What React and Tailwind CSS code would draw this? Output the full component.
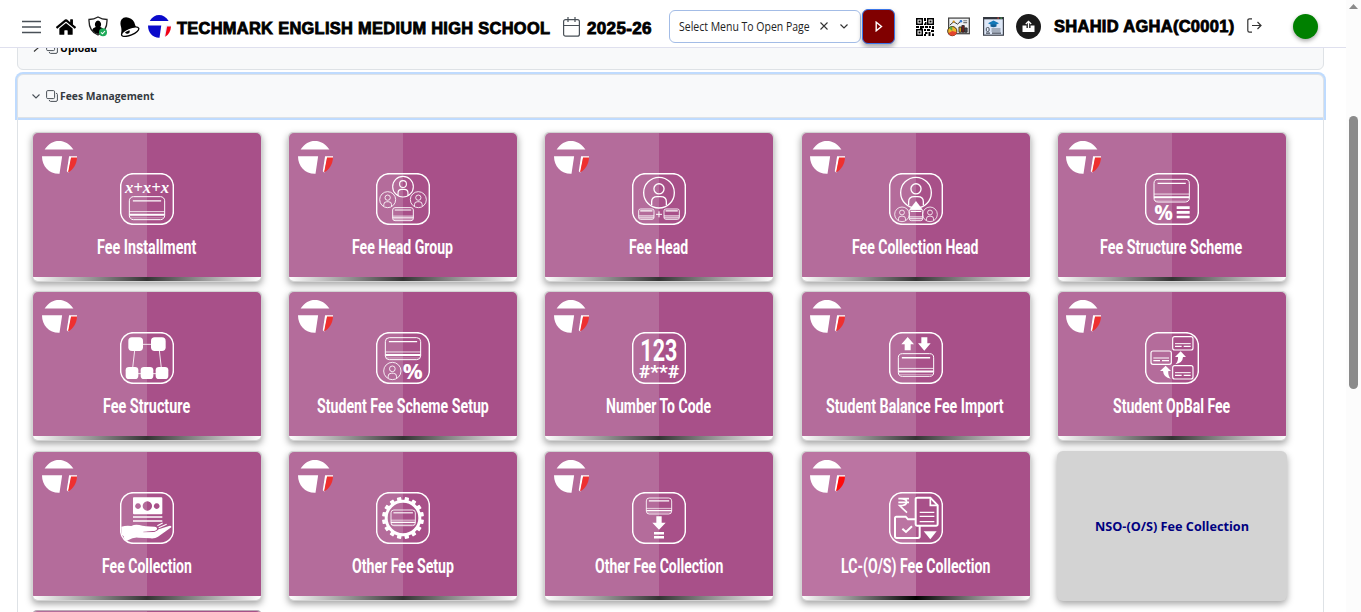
import { useLayoutEffect, useRef, useState } from "react";
import { FaHome } from "react-icons/fa";

/* Text squeezed or stretched horizontally to a given width. */
function FitText({ width, className = "", children }) {
  const ref = useRef(null);
  const [scale, setScale] = useState(1);
  useLayoutEffect(() => {
    setScale(width / ref.current.offsetWidth);
  }, [width]);
  return (
    <span className={"block shrink-0 whitespace-nowrap " + className} style={{ width }}>
      <span ref={ref} className="inline-block origin-left" style={{ transform: `scaleX(${scale})` }}>
        {children}
      </span>
    </span>
  );
}

function Logo({ main, accent, edge, className }) {
  return (
    <svg viewBox="0 0 106 100" preserveAspectRatio="none" className={className}>
      <path d="M8 26C20 8 34 0 51 0S83 8 95 26Z" fill={main} />
      <path d="M0 46H61L53 99C22 100 0 78 0 46Z" fill={main} />
      <path d="M82 46H106V52H88L80 96L75 92Z" fill={edge} />
      <path d="M88 50H106C105 70 96 86 79 95Z" fill={accent} />
    </svg>
  );
}

function Bank({ x, y, w, h, s = 3 }) {
  return (
    <g fill="none" stroke="#fff">
      <rect x={x} y={y} width={w} height={h} rx={h * 0.18} strokeWidth={s} />
      <path d={`M${x + w * 0.1} ${y + h * 0.18}H${x + w * 0.9}`} strokeWidth={s + 0.8} />
      <path d={`M${x} ${y + h * 0.65}H${x + w}`} strokeWidth={s * 0.8} />
      <path d={`M${x} ${y + h * 0.79}H${x + w}`} strokeWidth={h * 0.09} />
      <path d={`M${x + 3} ${y + h * 0.92}H${x + w - 3}`} strokeWidth={s * 0.4} />
    </g>
  );
}

function Person({ x, y, r, s = 3 }) {
  return (
    <g fill="none" stroke="#fff" strokeWidth={s}>
      <circle cx={x} cy={y} r={r} />
      <circle cx={x} cy={y - r * 0.25} r={r * 0.33} />
      <path
        d={`M${x - r * 0.48} ${y + r * 0.82}V${y + r * 0.6}Q${x - r * 0.48} ${y + r * 0.26} ${x - r * 0.12} ${y + r * 0.26}H${x + r * 0.12}Q${x + r * 0.48} ${y + r * 0.26} ${x + r * 0.48} ${y + r * 0.6}V${y + r * 0.82}`}
      />
    </g>
  );
}

function MiniCard({ x, y }) {
  return (
    <g fill="none" stroke="#fff">
      <rect x={x} y={y} width="61" height="40" rx="6" strokeWidth="3.5" />
      <path d={`M${x + 7} ${y + 21}h47`} strokeWidth="3" />
      <path d={`M${x + 7} ${y + 29}h20M${x + 33} ${y + 29}h21`} strokeWidth="4" />
    </g>
  );
}

const GEAR_TEETH = Array.from({ length: 16 }, (_, i) => i * 22.5 + 11.25);

const ICONS = {
  installment: (
    <>
      <text x="15" y="60" fontFamily="Liberation Serif, serif" fontStyle="italic" fontWeight="700" fontSize="50" textLength="132" lengthAdjust="spacingAndGlyphs" fill="#fff">x+x+x</text>
      <Bank x={28} y={71} w={106} h={69} />
    </>
  ),
  group: (
    <>
      <Person x={81} y={41} r={31} s={3.4} />
      <Person x={35} y={80} r={24} s={2.6} />
      <Person x={127} y={80} r={24} s={2.6} />
      <Bank x={50} y={104} w={62} h={39} s={2.8} />
    </>
  ),
  head: (
    <>
      <Person x={81} y={59} r={46} s={4} />
      <Bank x={20} y={108} w={46} h={31} s={2.6} />
      <Bank x={96} y={108} w={46} h={31} s={2.6} />
      <path d="M72 124H90M81 115V133" stroke="#fff" strokeWidth="3" />
    </>
  ),
  collectionHead: (
    <>
      <Person x={81} y={59} r={46} s={4} />
      <Person x={39} y={124} r={22} s={2.4} />
      <Person x={123} y={124} r={22} s={2.4} />
      <Bank x={61} y={109} w={40} h={34} s={2.6} />
      <path d="M81 84L101 110H61Z" fill="#fff" />
    </>
  ),
  scheme: (
    <>
      <Bank x={27} y={19} w={106} h={68} />
      <text x="28" y="142" fontFamily="Open Sans, sans-serif" fontWeight="700" fontSize="62" textLength="56" lengthAdjust="spacingAndGlyphs" fill="#fff">%</text>
      <path d="M95 104H134M95 118H134M95 132H134" stroke="#fff" strokeWidth="8" />
    </>
  ),
  structure: (
    <g fill="#fff">
      <path d="M60 37H100M44 55L38 108M118 55L124 108M50 125H120" stroke="#fff" strokeWidth="2.6" fill="none" />
      <rect x="25" y="16" width="44" height="41" rx="11" />
      <rect x="93" y="16" width="44" height="41" rx="11" />
      <rect x="17" y="105" width="38" height="36" rx="10" />
      <rect x="62" y="105" width="38" height="36" rx="10" />
      <rect x="107" y="105" width="38" height="36" rx="10" />
    </g>
  ),
  studentScheme: (
    <>
      <Bank x={28} y={17} w={106} h={66} />
      <Person x={49} y={117} r={26} s={2.6} />
      <text x="80" y="140" fontFamily="Open Sans, sans-serif" fontWeight="700" fontSize="66" textLength="60" lengthAdjust="spacingAndGlyphs" fill="#fff">%</text>
    </>
  ),
  number: (
    <g fill="#fff">
      <text x="25" y="86" fontFamily="Roboto, sans-serif" fontWeight="700" fontSize="95" textLength="111" lengthAdjust="spacingAndGlyphs">123</text>
      <text x="20" y="138" fontFamily="Roboto, sans-serif" fontWeight="700" fontSize="56" textLength="122" lengthAdjust="spacingAndGlyphs">#**#</text>
    </g>
  ),
  balance: (
    <>
      <path d="M56 15L75 37H65V55H47V37H37Z" fill="#fff" />
      <path d="M106 56L87 34H97V16H115V34H125Z" fill="#fff" />
      <Bank x={28} y={65} w={106} h={68} />
    </>
  ),
  opbal: (
    <>
      <MiniCard x={83} y={14} />
      <MiniCard x={18} y={57} />
      <MiniCard x={83} y={101} />
      <path d="M107 58L123 75H114Q113 93 91 97Q100 88 99 75H90Z" fill="#fff" />
      <path d="M62 101L78 117H70Q68 130 77 140Q56 137 54 117H45Z" fill="#fff" />
    </>
  ),
  collection: (
    <g fill="#fff">
      <path fillRule="evenodd" d="M41 16H124Q127 16 127 19V64Q127 67 124 67H42Q39 67 39 64V19Q39 16 41 16ZM82 28a14 14 0 1 0 .1 0ZM54 34a8.500 8.500 0 1 0 .1 0ZM110 34a8.500 8.500 0 1 0 .1 0Z" />
      <path d="M39 75H127M39 87H127" stroke="#fff" strokeWidth="5" />
      <path d="M4 104Q20 99 34 102Q44 96 58 99Q75 104 104 104Q112 105 111 111Q109 117 98 117L70 119V121L103 120Q112 117 116 112L147 102Q155 100 154 106L114 134Q106 140 92 139L55 137Q40 135 24 145Q14 151 11 133L5 128Z" />
      <path d="M112 101L128 93M116 107L140 97" stroke="#fff" strokeWidth="3.500" />
    </g>
  ),
  gear: (
    <>
      <circle cx="81" cy="78" r="50.500" fill="none" stroke="#fff" strokeWidth="9" />
      {GEAR_TEETH.map((a) => (
        <rect key={a} x="74.500" y="15" width="13" height="14" rx="2" fill="#fff" transform={`rotate(${a} 81 78)`} />
      ))}
      <Bank x={45} y={54} w={73} h={47} s={2.6} />
    </>
  ),
  otherCollection: (
    <>
      <Bank x={43} y={18} w={76} h={48} s={2.6} />
      <path d="M73 73H89V92H101L81 113L61 92H73Z" fill="#fff" />
      <path d="M66 124H96M66 136H96" stroke="#fff" strokeWidth="7.500" />
    </>
  ),
  lc: (
    <g fill="none" stroke="#fff">
      <path d="M28 20H60M28 31H60M35 20Q53 20 53 30Q53 41 32 41L54 62" strokeWidth="5" />
      <path d="M85 17H124L146 40V97Q146 101 142 101H84Q80 101 80 97V21Q80 17 85 17Z" strokeWidth="6" />
      <path d="M124 17V40H146" strokeWidth="5" />
      <path d="M92 61H136M92 73H136M92 89H136" strokeWidth="3.500" />
      <path d="M80 82H57L50 74H22Q18 74 18 79V133Q18 138 23 138H87Q92 138 92 133V101" strokeWidth="6" />
      <path d="M40 110L51 120L69 103" strokeWidth="6" />
      <path d="M104 118H143L124 142Z" fill="#fff" stroke="none" />
    </g>
  ),
};

const CARDS = [
  ["Fee Installment", 99, "installment"],
  ["Fee Head Group", 101, "group"],
  ["Fee Head", 59, "head"],
  ["Fee Collection Head", 126, "collectionHead"],
  ["Fee Structure Scheme", 142, "scheme"],
  ["Fee Structure", 87, "structure"],
  ["Student Fee Scheme Setup", 172, "studentScheme"],
  ["Number To Code", 105, "number"],
  ["Student Balance Fee Import", 178, "balance"],
  ["Student OpBal Fee", 117, "opbal"],
  ["Fee Collection", 90, "collection"],
  ["Other Fee Setup", 102, "gear"],
  ["Other Fee Collection", 128, "otherCollection"],
  ["LC-(O/S) Fee Collection", 149, "lc"],
];

function FeeCard({ title, width, icon }) {
  const vivid = icon === "lc";
  return (
    <div className="h-[150px] w-[230px] rounded-[5px] bg-[#d3d3d3] p-px shadow-[0_3px_7px_rgba(0,0,0,0.36)]">
      <div className="relative flex h-full flex-col overflow-hidden rounded-[5px]">
        <div className={"flex grow flex-col items-center " + (vivid ? "bg-[linear-gradient(90deg,#bb74a2_50%,#a85089_50%)]" : "bg-[linear-gradient(90deg,#b46c9b_50%,#a85089_50%)]")}>
          <svg viewBox="0 0 162 156" className="mt-[40px] h-[52px] w-[54px] shrink-0">
            <rect x="2" y="2" width="158" height="152" rx="38" fill="none" stroke="#fff" strokeWidth="4.500" />
            {ICONS[icon]}
          </svg>
          <FitText width={width} className="mr-px mt-[11px] font-['Roboto',sans-serif] text-[19.5px] font-bold leading-[24px] text-white">
            {title}
          </FitText>
        </div>
        <div className={"h-[4px] shrink-0 " + (vivid ? "bg-[linear-gradient(90deg,#fff,#000_50%,#fff)]" : "bg-[linear-gradient(90deg,#fff,#333_50%,#fff)]")} />
        <Logo main="#fff" accent={vivid ? "#ff0a0a" : "#ee3030"} edge="#fff" className="absolute left-[8.500px] top-[8px] h-[33px] w-[35px]" />
      </div>
    </div>
  );
}

function CloneIcon() {
  return (
    <svg viewBox="0 0 12 12" className="size-[12px] shrink-0" fill="none" stroke="#495057" strokeWidth="1">
      <rect x="0.600" y="0.600" width="8" height="8" rx="1.200" />
      <path d="M10 3.300Q11.400 3.300 11.400 4.500V10Q11.400 11.400 10 11.400H4.600Q3.300 11.400 3.300 10" />
    </svg>
  );
}

function QrIcon() {
  return (
    <svg viewBox="0 0 18 18" className="ml-[21px] size-[18px] shrink-0" fill="#000">
      <path fillRule="evenodd" d="M0 0H7V7H0ZM1.500 1.500V5.500H5.500V1.500ZM11 0H18V7H11ZM12.500 1.500V5.500H16.500V1.500ZM0 11H7V18H0ZM1.500 12.500V16.500H5.500V12.500Z" />
      <path d="M2.500 2.500h2v2H2.500zM13.500 2.500h2v2h-2zM2.500 13.500h2v2H2.500zM8 0h2v3H8zM9 4h1.500v3H8V5.500h1zM0 8h3v2H0zM4 8h4v2H6.500v1H4zM9 8h3v2H9zM13 8h2v2h-2zM16 8h2v3h-2zM8 11h2v2H8zM11 11h3v2h-3zM15 12h3v2h-3zM9 14h2.500v2H9zM8 16h2v2H8zM12.500 14h2v4h-2zM16 15.500h2V18h-2z" />
    </svg>
  );
}

function ChartIcon() {
  return (
    <svg viewBox="0 0 24 20" className="ml-[13px] h-[20px] w-[23px] shrink-0" fill="none">
      <rect x="1.700" y="0.700" width="21.600" height="16.300" fill="#eef0f2" stroke="#444" strokeWidth="1.300" />
      <path d="M3 8L7 4.500L11 7L15 3.500" stroke="#333" strokeWidth="1" />
      <circle cx="7" cy="4.500" r="1.200" fill="#c98f1c" />
      <circle cx="14.500" cy="4" r="1.300" fill="#2a74d0" />
      <path d="M17 3.500H21M17 5.500H21" stroke="#777" strokeWidth="1.200" />
      <path d="M12.500 10H15V15.500H12.500Z" fill="#e5a91f" stroke="#222" strokeWidth=".9" />
      <path d="M15.500 8.500H18V15.500H15.500Z" fill="#7b2020" stroke="#222" strokeWidth=".9" />
      <path d="M18.500 11H21V15.500H18.500Z" fill="#4a4a50" stroke="#222" strokeWidth=".9" />
      <circle cx="5.500" cy="14.300" r="4.800" fill="#efb52b" stroke="#402a18" strokeWidth="1" />
      <path d="M5.500 14.300L2 11Q3.500 9.500 5.500 9.500Z" fill="#57a844" />
      <path d="M5.500 14.300L10.300 15.500A4.800 4.800 0 0 1 1.300 16.500Z" fill="#e2452f" />
    </svg>
  );
}

function CertificateIcon() {
  return (
    <svg viewBox="0 0 21 19" className="ml-[13px] h-[19px] w-[21px] shrink-0" fill="none">
      <rect x=".6" y=".6" width="19.800" height="17.600" fill="#dde7f7" stroke="#3c414b" strokeWidth="1.200" />
      <path d="M.6 1.300H20.400" stroke="#30343c" strokeWidth="2" />
      <path d="M14.500 1.200h1.300" stroke="#e64a3a" strokeWidth="1.200" />
      <path d="M17.500 1.200h1.300" stroke="#4bb04f" strokeWidth="1.200" />
      <path d="M10.500 3.500L16 6.200L10.500 9L5 6.200Z" fill="#1479b8" />
      <path d="M7.500 7.500V9.500Q10.500 11 13.500 9.500V7.500" fill="#155f94" />
      <rect x="3.300" y="10.500" width="2.800" height="4" rx="1.200" stroke="#444b57" />
      <path d="M8.500 12H17.500M8.500 14H17.500" stroke="#6b7482" strokeWidth="1.200" />
      <path d="M3 16.200H7M9 16.200H18" stroke="#444b57" strokeWidth="1.200" />
    </svg>
  );
}

function Header() {
  return (
    <header className="flex h-[48px] shrink-0 items-center border-b border-[#dfe0ee] bg-white pt-[6px] font-['Liberation_Sans',sans-serif] text-black">
      <svg viewBox="0 0 19 14" className="ml-[22px] h-[14px] w-[19px] shrink-0" stroke="#495057" strokeWidth="1.700">
        <path d="M0 1.500H19M0 7H19M0 12.500H19" />
      </svg>
      <FaHome className="ml-[15px] h-[20px] w-[20px] shrink-0" />
      <svg viewBox="0 0 20 21" className="ml-[12px] h-[21px] w-[20px] shrink-0">
        <path d="M10 1Q6 3.500 1 3.500Q.500 15 10 19Q19.500 15 19 3.500Q14 3.500 10 1Z" fill="#fff" stroke="#222" strokeWidth="1.300" />
        <path d="M10 4.500A3.300 3.900 0 0 1 12.300 11Q15.500 12 15.800 14Q13.500 17 10 18Q6.500 17 4.300 14Q4.500 12 7.700 11A3.300 3.900 0 0 1 10 4.500Z" fill="#000" />
        <circle cx="15" cy="16.300" r="4" fill="#1faa59" />
        <path d="M13 16.400L14.500 17.800L17 15" fill="none" stroke="#fff" strokeWidth="1.100" />
      </svg>
      <svg viewBox="0 0 20 20" className="ml-[12px] size-[20px] shrink-0">
        <path d="M1.500 2.500Q4-.5 8.500 .7Q14 2.500 15 7.500L16.200 11L1 17.500Q2 12.500 .8 9Q-.2 5 1.500 2.500Z" />
        <ellipse cx="10.200" cy="14.700" rx="9.200" ry="3.500" transform="rotate(-22 10.200 14.700)" fill="#fff" stroke="#000" strokeWidth="1.300" />
        <path d="M5 15.200Q6 17.500 8.500 16.600Q10.500 15.500 9.500 13.300Z" />
      </svg>
      <Logo main="#0a0acb" accent="#f00014" edge="#e8e8ff" className="ml-[8px] h-[23px] w-[23px] shrink-0" />
      <FitText width={373} className="ml-[6px] translate-y-[2px] text-[16px] font-bold leading-[20px] tracking-[0.3px] [-webkit-text-stroke:0.8px_black]">
        TECHMARK ENGLISH MEDIUM HIGH SCHOOL
      </FitText>
      <svg viewBox="0 0 17 20" className="ml-[13px] h-[20px] w-[17px] shrink-0" fill="none" stroke="#495057" strokeWidth="1.200">
        <rect x=".6" y="2.600" width="15.800" height="16.600" rx="2" />
        <path d="M.6 8.500H16.400M5 0V5M12 0V5" />
      </svg>
      <FitText width={65} className="ml-[7px] translate-y-[2px] text-[16px] font-bold leading-[20px] tracking-[0.3px] [-webkit-text-stroke:0.8px_black]">
        2025-26
      </FitText>
      <div className="ml-[17px] flex h-[33px] w-[192px] shrink-0 items-center rounded-[6px] border border-[#a3bce6] bg-white pl-[9px]">
        <FitText width={131} className="font-['Open_Sans',sans-serif] text-[12px] leading-[16px] text-[#222]">
          Select Menu To Open Page
        </FitText>
        <svg viewBox="0 0 8 8" className="ml-[10px] size-[8px] -translate-y-px" stroke="#333" strokeWidth="1.100">
          <path d="M.5.5L7.500 7.500M7.500.5L.5 7.500" />
        </svg>
        <svg viewBox="0 0 8 5" className="ml-[12px] h-[5px] w-[8px]" fill="none" stroke="#333" strokeWidth="1.200">
          <path d="M.5.500L4 4L7.500.5" />
        </svg>
      </div>
      <div className="ml-px flex h-[35px] w-[33px] shrink-0 items-center justify-center rounded-[6px] border border-[#3b76e8] bg-[#800000] shadow-[0_3px_5px_rgba(0,0,0,0.35)]">
        <svg viewBox="0 0 8 11" className="h-[11px] w-[8px]" fill="none" stroke="#fff" strokeWidth="1.400">
          <path d="M1.200 1.200V9.800L6.500 5.500Z" />
        </svg>
      </div>
      <div className="flex items-center">
        <QrIcon />
        <ChartIcon />
        <CertificateIcon />
        <div className="ml-[12px] flex size-[25px] shrink-0 items-center justify-center rounded-full bg-[#1b1b1b]">
          <svg viewBox="0 0 13 13" className="size-[13px]">
            <path d="M.5 5.500H4.500V8H8.500V5.500H12.500V12H.5Z" fill="#fff" />
            <path d="M6.500 10V1.500M3.800 4L6.500 1.300L9.200 4" fill="none" stroke="#fff" strokeWidth="1.300" />
          </svg>
        </div>
        <FitText width={181} className="ml-[13px] text-[16px] font-bold leading-[20px] tracking-[0.3px] [-webkit-text-stroke:0.8px_black]">
          SHAHID AGHA(C0001)
        </FitText>
        <svg viewBox="0 0 15 15" className="ml-[12px] size-[15px] shrink-0 -translate-y-px" fill="none" stroke="#333" strokeWidth="1.200">
          <path d="M5 .8H2.500Q.800.800.800 2.500V12.500Q.800 14.200 2.500 14.200H5M5 7.500H14M10.500 4L14 7.500L10.500 11" />
        </svg>
        <div className="ml-[31px] size-[25px] shrink-0 rounded-full bg-[#008000] shadow-[0_2px_4px_rgba(0,0,0,0.35)]" />
      </div>
    </header>
  );
}

export default function App() {
  return (
    <div className="flex h-[612px] w-[1361px] overflow-hidden bg-white">
      <div className="flex w-[1346px] shrink-0 flex-col">
        <Header />
        <main className="grow overflow-hidden pl-[17px] pr-[22px] font-['Open_Sans',sans-serif] text-[11px] font-bold">
          <div className="-mt-[22px] flex h-[44px] items-center rounded-[6px] border border-[#dee2e6] bg-[#f8f9fa] pl-[14px] text-black">
            <svg viewBox="0 0 8 8" className="size-[8px]" fill="none" stroke="#333" strokeWidth="1.100">
              <path d="M2 .500L6 4L2 7.500" />
            </svg>
            <span className="ml-[6px] flex"><CloneIcon /></span>
            <FitText width={37} className="ml-[2px]">Upload</FitText>
          </div>
          <div className="mt-[4px] flex h-[44px] items-center rounded-t-[6px] border border-[#dee2e6] bg-[#f8f9fa] pl-[14px] text-[#343a40] shadow-[0_0_0_2px_#bfdbfe]">
            <svg viewBox="0 0 8 5" className="h-[5px] w-[8px]" fill="none" stroke="#495057" strokeWidth="1.100">
              <path d="M.5.500L4 4L7.500.5" />
            </svg>
            <span className="ml-[6px] flex"><CloneIcon /></span>
            <FitText width={94} className="ml-[2px]">Fees Management</FitText>
          </div>
          <div className="grid h-[600px] grid-cols-[repeat(5,256.200px)] auto-rows-[159.400px] border-x border-[#dee2e6] pl-[14px] pt-[14px]">
            {CARDS.map(([title, width, icon]) => (
              <FeeCard key={title} title={title} width={width} icon={icon} />
            ))}
            <div className="flex h-[150px] w-[230px] items-center justify-center rounded-[6px] bg-[#d3d3d3] pt-[2px] text-[13px] text-[#000080] shadow-[0_3px_7px_rgba(0,0,0,0.36)]">
              <FitText width={154}>NSO-(O/S) Fee Collection</FitText>
            </div>
            <div className="h-[150px] w-[230px] rounded-[5px] bg-[#b9a9b4] p-px">
              <div className="h-full rounded-[5px] bg-[linear-gradient(90deg,#b46c9b_50%,#a85089_50%)]" />
            </div>
          </div>
        </main>
      </div>
      <div className="flex w-[15px] shrink-0 flex-col items-center bg-[#fcfcfc] pt-[4px]">
        <svg viewBox="0 0 9 5" className="h-[5px] w-[9px] shrink-0" fill="#8b8b8b">
          <path d="M4.500 0L9 5H0Z" />
        </svg>
        <div className="mt-[107px] h-[273px] w-[9px] shrink-0 rounded-full bg-[#8b8b8b]" />
      </div>
    </div>
  );
}
